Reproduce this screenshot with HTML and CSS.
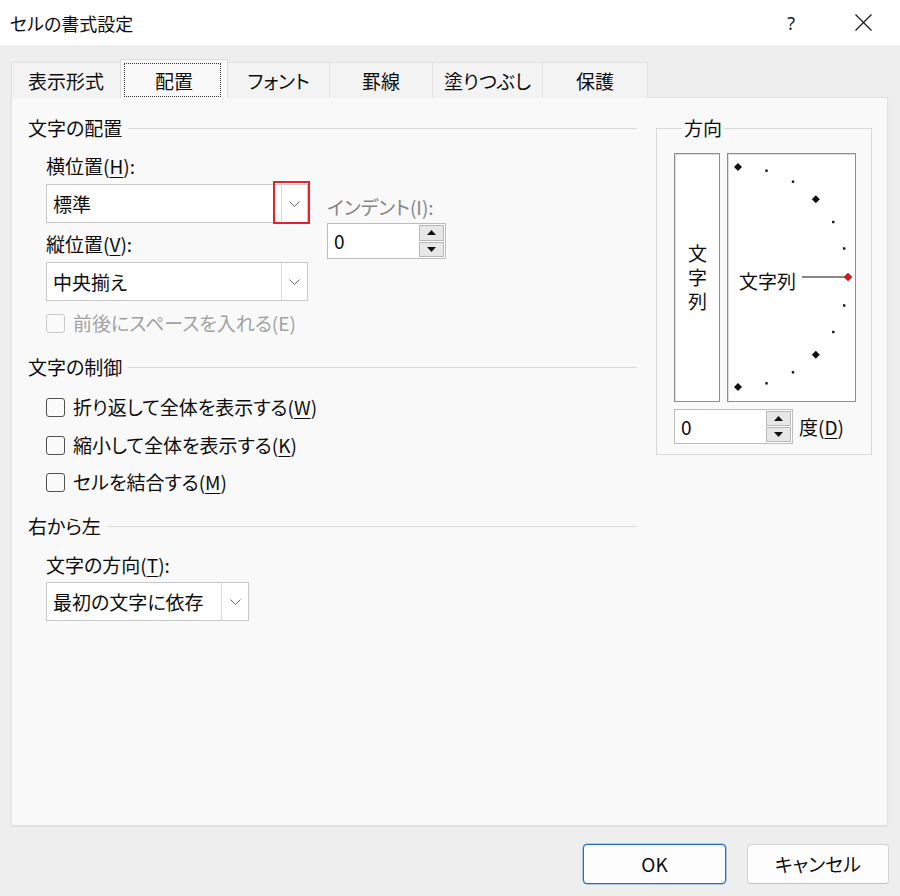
FILE: index.html
```html
<!DOCTYPE html>
<html lang="ja">
<head>
<meta charset="utf-8">
<title>セルの書式設定</title>
<link rel="stylesheet" href="styles.css">
</head>
<body>
<div class="dialog">
  <header class="titlebar">
    <span class="title">セルの書式設定</span>
    <span class="help">?</span>
    <svg class="close" width="17" height="17" viewBox="0 0 17 17"><path d="M0.5 0.5L16.5 16.5M16.5 0.5L0.5 16.5" stroke="#1a1a1a" stroke-width="1.2" fill="none"/></svg>
  </header>

  <nav class="tabs">
    <div class="tab t1">表示形式</div>
    <div class="tab t2 active"><span class="focus"></span>配置</div>
    <div class="tab t3">フォント</div>
    <div class="tab t4">罫線</div>
    <div class="tab t5">塗りつぶし</div>
    <div class="tab t6">保護</div>
  </nav>

  <main class="panel">
    <div class="left">
      <div class="section"><span>文字の配置</span><span class="rule"></span></div>

      <div class="align-row">
        <div class="align-col">
          <div class="label">横位置(<u>H</u>):</div>
          <div class="combo combo-wide combo-h">
            <span class="combo-text">標準</span>
            <span class="combo-btn"><svg width="11" height="6" viewBox="0 0 11 6"><polyline points="0.5,0.5 5.5,5.5 10.5,0.5" fill="none" stroke="#6a6a6a" stroke-width="1"/></svg></span>
            <span class="highlight"></span>
          </div>
          <div class="label label-v">縦位置(<u>V</u>):</div>
          <div class="combo combo-wide combo-v">
            <span class="combo-text">中央揃え</span>
            <span class="combo-btn"><svg width="11" height="6" viewBox="0 0 11 6"><polyline points="0.5,0.5 5.5,5.5 10.5,0.5" fill="none" stroke="#6a6a6a" stroke-width="1"/></svg></span>
          </div>
        </div>
        <div class="indent-col">
          <div class="label-indent">インデント(I):</div>
          <div class="spin spin-indent">
            <span class="spin-value">0</span>
            <span class="spin-btns">
              <span class="spin-btn"><svg width="9" height="5" viewBox="0 0 9 5"><polygon points="4.5,0 9,5 0,5" fill="#111"/></svg></span>
              <span class="spin-btn"><svg width="9" height="5" viewBox="0 0 9 5"><polygon points="0,0 9,0 4.5,5" fill="#111"/></svg></span>
            </span>
          </div>
        </div>
      </div>

      <div class="check disabled check-space"><span class="box"></span><span>前後にスペースを入れる(E)</span></div>

      <div class="section section-2"><span>文字の制御</span><span class="rule"></span></div>
      <div class="check check-1"><span class="box"></span><span>折り返して全体を表示する(<u>W</u>)</span></div>
      <div class="check check-2"><span class="box"></span><span>縮小して全体を表示する(<u>K</u>)</span></div>
      <div class="check check-3"><span class="box"></span><span>セルを結合する(<u>M</u>)</span></div>

      <div class="section section-3"><span>右から左</span><span class="rule"></span></div>
      <div class="label label-t">文字の方向(<u>T</u>):</div>
      <div class="combo combo-dir">
        <span class="combo-text">最初の文字に依存</span>
        <span class="combo-btn"><svg width="11" height="6" viewBox="0 0 11 6"><polyline points="0.5,0.5 5.5,5.5 10.5,0.5" fill="none" stroke="#6a6a6a" stroke-width="1"/></svg></span>
      </div>
    </div>

    <fieldset class="direction">
      <legend>方向</legend>
      <div class="dir-boxes">
        <div class="vbox"><span class="vtext">文字列</span></div>
        <div class="dial">
          <svg class="dial-svg" width="127" height="247" viewBox="0 0 127 247">
            <g fill="#111">
              <polygon points="10,9 14,13 10,17 6,13"/>
              <rect x="37.3" y="15.5" width="2.4" height="2.4"/>
              <rect x="63.8" y="26.5" width="2.4" height="2.4"/>
              <polygon points="87.8,41.2 91.8,45.2 87.8,49.2 83.8,45.2"/>
              <rect x="104.1" y="66.8" width="2.4" height="2.4"/>
              <rect x="115" y="93.3" width="2.4" height="2.4"/>
              <rect x="115" y="150.3" width="2.4" height="2.4"/>
              <rect x="104.1" y="176.8" width="2.4" height="2.4"/>
              <polygon points="87.8,196.8 91.8,200.8 87.8,204.8 83.8,200.8"/>
              <rect x="63.8" y="217.1" width="2.4" height="2.4"/>
              <rect x="37.3" y="228.1" width="2.4" height="2.4"/>
              <polygon points="10,229 14,233 10,237 6,233"/>
            </g>
            <line x1="74" y1="123" x2="117" y2="123" stroke="#111" stroke-width="1.2"/>
            <polygon points="120,119 124,123 120,127 116,123" fill="#e0141e" stroke="#a00" stroke-width="0.5"/>
            <text class="dial-text" x="11" y="135">文字列</text>
          </svg>
        </div>
      </div>
      <div class="deg-row">
        <div class="spin spin-deg">
          <span class="spin-value">0</span>
          <span class="spin-btns">
            <span class="spin-btn"><svg width="9" height="5" viewBox="0 0 9 5"><polygon points="4.5,0 9,5 0,5" fill="#111"/></svg></span>
            <span class="spin-btn"><svg width="9" height="5" viewBox="0 0 9 5"><polygon points="0,0 9,0 4.5,5" fill="#111"/></svg></span>
          </span>
        </div>
        <span class="deg-label">度(<u>D</u>)</span>
      </div>
    </fieldset>
  </main>

  <footer class="footer">
    <div class="btn btn-ok">OK</div>
    <div class="btn btn-cancel">キャンセル</div>
  </footer>
</div>
</body>
</html>
```

FILE: styles.css
```css
* { box-sizing: border-box; }
html, body { margin: 0; padding: 0; }
body {
  background: #eeeeee;
  font-family: "Noto Sans CJK JP", "Noto Sans", sans-serif;
  font-size: 19px;
  line-height: 24px;
  color: #0d0d0d;
  font-feature-settings: "palt";
}
u { text-decoration-thickness: 1px; text-underline-offset: 3px; }

.dialog { width: 900px; height: 896px; overflow: hidden; }

/* title bar */
.titlebar {
  height: 45px;
  background: #ffffff;
  display: flex;
  align-items: center;
  padding: 0 28px 0 10px;
}
.title { font-size: 18px; }
.help {
  margin-left: auto;
  margin-right: 60px;
  font-family: "Noto Sans", sans-serif;
  font-size: 18px;
  color: #222;
}
.close { display: block; }

/* tabs */
.tabs {
  display: flex;
  align-items: flex-end;
  height: 39px;
  margin-top: 14px;
  padding-left: 11px;
}
.tab {
  height: 36px;
  padding: 6px 0 5px;
  text-align: center;
  background: #f3f3f3;
  border: 1px solid #e1e1e1;
  border-bottom: none;
  margin-right: -1px;
}
.t1 { width: 110px; }
.t2 { width: 108px; }
.t3 { width: 103px; }
.t4 { width: 104px; }
.t5 { width: 111px; }
.t6 { width: 106px; }
.tab.active {
  height: 39px;
  padding-top: 9px;
  background: #f9f9f9;
  border-color: #dcdcdc;
  position: relative;
  z-index: 2;
}
.focus {
  position: absolute;
  left: 3px;
  right: 6px;
  top: 3px;
  bottom: 1px;
  border: 1px dotted #333;
}

/* panel */
.panel {
  margin: -1px 0 0 11px;
  width: 877px;
  height: 729px;
  background: #f9f9f9;
  border: 1px solid #e0e0e0;
  box-shadow: 0 1px 1px rgba(0, 0, 0, 0.05);
  display: flex;
  align-items: flex-start;
  padding: 18px 15px 0 16px;
}
.left { width: 609px; flex: none; }

.section { display: flex; align-items: center; }
.rule { flex: 1; height: 1px; background: #dadada; margin-left: 6px; }
.section-2 { margin-top: 20px; }
.section-3 { margin-top: 20px; }

.align-row { display: flex; margin-top: 14px; padding-left: 18px; }
.align-col { width: 262px; }
.label-v { margin-top: 9px; }
.combo-h { margin-top: 6px; }
.combo-v { margin-top: 6px; }

.indent-col { margin-left: 19px; margin-top: 41px; }
.label-indent { color: #858585; }
.spin-indent { margin-top: 4px; height: 36px; }

.label-t { margin-top: 15px; padding-left: 18px; }

/* combo box */
.combo {
  display: flex;
  align-items: center;
  height: 39px;
  background: #ffffff;
  border: 1px solid #c8c8c8;
  position: relative;
}
.combo-wide { width: 262px; }
.combo-dir { width: 203px; margin: 5px 0 0 18px; }
.combo-text { flex: 1; padding-left: 6px; white-space: nowrap; }
.combo-btn {
  width: 26px;
  align-self: stretch;
  border-left: 1px solid #dadada;
  display: flex;
  align-items: center;
  justify-content: center;
}
.combo-dir .combo-btn { width: 27px; }
.combo-btn svg { display: block; }
.highlight {
  position: absolute;
  top: -4px;
  right: -3px;
  width: 37px;
  height: 43px;
  border: 2px solid #e8202a;
}

/* spin box */
.spin {
  display: flex;
  width: 119px;
  background: #ffffff;
  border: 1px solid #bdbdbd;
}
.spin-value { flex: 1; padding-left: 6px; align-self: center; }
.spin-btns {
  width: 26px;
  display: flex;
  flex-direction: column;
  gap: 1px;
  padding: 1px 1px 1px 0;
}
.spin-btn {
  flex: 1;
  background: #e7e7e7;
  border: 1px solid #b8b8b8;
  display: flex;
  align-items: center;
  justify-content: center;
}
.spin-btn svg { display: block; }

/* checkboxes */
.check { display: flex; align-items: center; gap: 8px; padding-left: 18px; height: 24px; }
.box {
  width: 19px;
  height: 19px;
  border: 1px solid #505050;
  border-radius: 3px;
  background: #fbfbfb;
  flex: none;
}
.check.disabled { color: #a2a2a2; }
.check.disabled .box { border-color: #c9c9c9; }
.check-space { margin-top: 10px; }
.check-1 { margin-top: 16px; }
.check-2 { margin-top: 14px; }
.check-3 { margin-top: 13px; }

/* direction group */
.direction {
  margin: 0 0 0 19px;
  width: 216px;
  min-width: 0;
  border: 1px solid #d9d9d9;
  padding: 13px 15px 10px 17px;
  flex: none;
}
.direction legend { padding: 0 2px; margin-left: 8px; }
.dir-boxes { display: flex; gap: 7px; }
.vbox {
  width: 46px;
  height: 249px;
  background: #ffffff;
  border: 1px solid #8e8e8e;
  box-shadow: inset 1px 1px 0 #dedede;
  display: flex;
  align-items: center;
  justify-content: center;
}
.vtext {
  writing-mode: vertical-rl;
  text-orientation: upright;
  letter-spacing: 5px;
  margin-top: 4px;
}
.dial {
  width: 129px;
  height: 249px;
  background: #ffffff;
  border: 1px solid #8e8e8e;
  box-shadow: inset 1px 1px 0 #dedede;
  position: relative;
}
.dial-svg { position: absolute; left: 0; top: 0; display: block; }
.dial-text {
  font-family: "Noto Sans CJK JP", sans-serif;
  font-size: 19px;
  fill: #0d0d0d;
  font-feature-settings: "palt";
}
.deg-row { display: flex; align-items: center; margin-top: 7px; }
.spin-deg { height: 35px; }
.deg-label { margin-left: 6px; }

/* footer */
.footer {
  display: flex;
  justify-content: flex-end;
  gap: 21px;
  padding: 18px 11px 0 0;
}
.btn {
  height: 40px;
  border-radius: 4px;
  background: #fdfdfd;
  border: 1px solid #d2d2d2;
  border-bottom-color: #c2c2c2;
  display: flex;
  align-items: center;
  justify-content: center;
}
.btn-ok {
  width: 143px;
  border-color: #1f6fc5;
  box-shadow: 0 0 0 0.5px rgba(31, 111, 197, 0.6);
}
.btn-cancel { width: 142px; }
```
